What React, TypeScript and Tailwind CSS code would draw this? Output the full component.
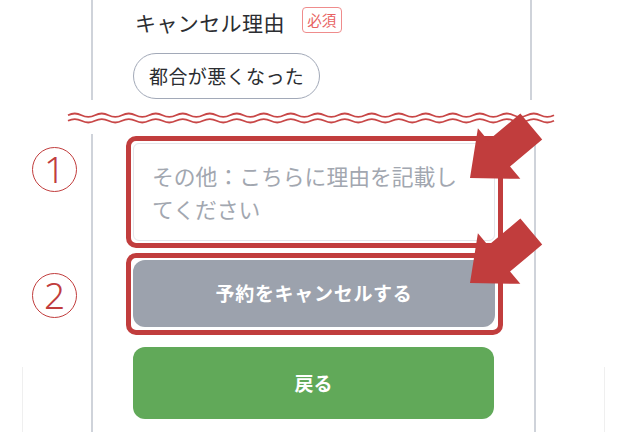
const jp = { fontFamily: '"Noto Sans CJK JP", "Noto Sans", sans-serif' };

function wavePath(y: number) {
  let d = `M68 ${y} q6.75 -3.4 13.5 0`;
  for (let i = 0; i < 35; i++) d += " t13.5 0";
  return d;
}

function Arrow({ x, y }: { x: number; y: number }) {
  return (
    <g transform={`translate(${x} ${y}) rotate(-40)`}>
      <polygon points="0,0 38,-33 38,-17 80,-17 80,17 38,17 38,33" fill="#c13d3d" />
    </g>
  );
}

function Num({ n }: { n: string }) {
  return (
    <div
      className="flex h-[45px] w-[45px] items-center justify-center rounded-full border-[1.5px] border-[#c13d3d] text-[37px] font-light leading-none text-[#c13d3d]"
      style={{ fontFamily: '"Noto Sans", "DejaVu Sans", sans-serif' }}
    >
      <span className="-mt-[2px]">{n}</span>
    </div>
  );
}

export default function App() {
  return (
    <div className="relative h-[432px] w-[628px] overflow-hidden bg-white" style={jp}>
      {/* top part of the form */}
      <div className="flex h-[100px]">
        <div className="w-[91px]" />
        <div className="w-[441px] border-x-2 border-[#cfd3da] pl-[40px] pt-[7px]">
          <div className="flex items-start">
            <span className="ml-[2px] text-[21px] leading-[31px] tracking-[0.4px] text-[#2b2d31]">
              キャンセル理由
            </span>
            <span className="ml-[17px] flex h-[26px] w-[40px] items-center justify-center rounded-[4px] border border-[#ef8c8c] text-[14.5px] leading-none text-[#e86262]">
              必須
            </span>
          </div>
          <div className="mt-[15px] inline-flex h-[46px] items-center rounded-full border-[1.5px] border-[#a2a9b8] px-[15px] text-[19px] tracking-[0.4px] text-[#2b2d31]">
            都合が悪くなった
          </div>
        </div>
      </div>

      {/* cut mark */}
      <svg width="628" height="34" className="block">
        <path d={wavePath(15.2)} fill="none" stroke="#c84747" strokeWidth="1.8" />
        <path d={wavePath(20.8)} fill="none" stroke="#c84747" strokeWidth="1.8" />
      </svg>

      {/* lower part */}
      <div className="flex">
        <div className="w-[91px] pl-[32px] pt-[13px]">
          <Num n="1" />
        </div>
        <div className="w-[445px] border-x-2 border-[#cfd3da] pb-[3px] pl-[33px] pt-[2px]">
          <div className="h-[112px] w-[377px] rounded-[10px] border-[5px] border-[#c13d3d] bg-white p-[2px] pr-[3px]">
            <textarea
              placeholder="その他：こちらに理由を記載してください"
              className="h-full w-full resize-none rounded-[6px] border border-[#e3e6ea] px-[18px] pt-[16px] text-[21.8px] leading-[32.5px] text-[#333] outline-none placeholder:text-[#a2a7b0]"
              style={jp}
            />
          </div>
        </div>
      </div>

      <div className="flex">
        <div className="w-[91px] pl-[32px] pt-[22px]">
          <Num n="2" />
        </div>
        <div className="w-[445px] border-x-2 border-[#cfd3da] pb-[5px] pl-[33px] pt-[2px]">
          <div className="h-[82px] w-[377px] rounded-[10px] border-[5px] border-[#c13d3d] bg-white p-[2px] pb-[3px] pr-[3px]">
            <button className="flex h-full w-full items-center justify-center rounded-[12px] bg-[#9ca2ad] text-[19px] font-bold tracking-[0.7px] text-white">
              予約をキャンセルする
            </button>
          </div>
        </div>
      </div>

      <div className="flex h-[92px]">
        <div className="w-[91px] pl-[22px] pt-[27px]">
          <div className="h-full border-l border-[#efefef]" />
        </div>
        <div className="w-[445px] border-x-2 border-[#cfd3da] pl-[40px] pt-[7px]">
          <button className="flex h-[72px] w-[361px] items-center justify-center rounded-[12px] bg-[#61a959] text-[19px] font-bold text-white">
            戻る
          </button>
        </div>
        <div className="w-[92px] pl-[68px] pt-[27px]">
          <div className="h-full border-l border-[#efefef]" />
        </div>
      </div>

      {/* callout arrows */}
      <svg width="628" height="432" className="pointer-events-none absolute inset-0">
        <Arrow x={470} y={178} />
        <Arrow x={470} y={283} />
      </svg>
    </div>
  );
}
